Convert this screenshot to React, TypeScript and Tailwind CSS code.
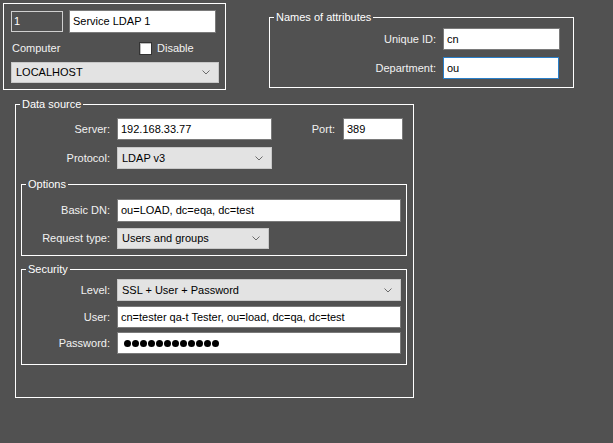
import type { ReactNode } from 'react';

function Chevron() {
  return (
    <svg width="8" height="5" viewBox="0 0 8 5" className="shrink-0">
      <polyline points="0.5,0.5 4,4 7.5,0.5" fill="none" stroke="#6b6b6b" strokeWidth="1" />
    </svg>
  );
}

function Field({ w, h = 'h-[22px]', value, focused = false }: { w: string; h?: string; value: ReactNode; focused?: boolean }) {
  return (
    <div
      className={`${w} ${h} flex items-center bg-white pl-[3px] text-black border ${focused ? 'border-[#2a7fc9]' : 'border-[#7a7a7a]'}`}
    >
      {value}
    </div>
  );
}

function Select({ w, h = 'h-[22px]', value }: { w: string; h?: string; value: string }) {
  return (
    <div className={`${w} ${h} flex items-center justify-between bg-[#e3e3e3] border border-[#c8c8c8] pl-[4px] pr-[8px] text-black`}>
      <span>{value}</span>
      <Chevron />
    </div>
  );
}

function Group({ title, className, children }: { title: string; className: string; children: ReactNode }) {
  return (
    <fieldset className={`border border-white ${className}`}>
      <legend className="ml-[4px] px-[2px] leading-[14px] text-white">{title}</legend>
      {children}
    </fieldset>
  );
}

function Row({ label, labelW, className = '', children }: { label: string; labelW: string; className?: string; children: ReactNode }) {
  return (
    <div className={`flex items-center ${className}`}>
      <span className={`${labelW} text-right text-[#f2f2f2] pr-[7px]`}>{label}</span>
      {children}
    </div>
  );
}

export default function App() {
  const dots = Array.from({ length: 12 });
  return (
    <div
      className="w-[613px] h-[443px] bg-[#515151] text-[11px] overflow-hidden"
      style={{ fontFamily: '"Liberation Sans", Arial, sans-serif' }}
    >
      {/* top row */}
      <div className="flex items-start">
        <div className="ml-[3px] mt-[3px] w-[223px] h-[87px] border border-white">
          <div className="flex items-start pl-[7px] pt-[6px] gap-[6px]">
            <div className="mt-px w-[52px] h-[21px] border border-[#cfcfcf] flex items-center pl-[2px] text-white">1</div>
            <Field w="w-[147px]" h="h-[23px]" value="Service LDAP 1" />
          </div>
          <div className="flex items-center pl-[8px] mt-[8px] h-[15px]">
            <span className="w-[127px] text-[#f2f2f2]">Computer</span>
            <span className="w-[13px] h-[13px] bg-white border border-[#333] shadow-[inset_1px_1px_0_#bbb]" />
            <span className="ml-[5px] text-[#f2f2f2]">Disable</span>
          </div>
          <div className="pl-[7px] mt-[6px]">
            <Select w="w-[208px]" h="h-[21px]" value="LOCALHOST" />
          </div>
        </div>

        <Group title="Names of attributes" className="ml-[43px] mt-[10px] w-[305px] h-[78px]">
          <Row label="Unique ID:" labelW="w-[173px]" className="mt-[4px]">
            <Field w="w-[117px]" value="cn" />
          </Row>
          <Row label="Department:" labelW="w-[173px]" className="mt-[7px]">
            <Field w="w-[116px]" value="ou" focused />
          </Row>
        </Group>
      </div>

      {/* data source */}
      <Group title="Data source" className="ml-[15px] mt-[7px] w-[399px] h-[301px]">
        <Row label="Server:" labelW="w-[101px]" className="mt-[7px]">
          <Field w="w-[155px]" value="192.168.33.77" />
          <span className="w-[71px] text-right pr-[8px] text-[#f2f2f2]">Port:</span>
          <Field w="w-[60px]" value="389" />
        </Row>
        <Row label="Protocol:" labelW="w-[101px]" className="mt-[7px]">
          <Select w="w-[155px]" value="LDAP v3" />
        </Row>

        <Group title="Options" className="ml-[5px] mt-[8px] w-[386px] h-[79px]">
          <Row label="Basic DN:" labelW="w-[95px]" className="mt-[8px]">
            <Field w="w-[284px]" h="h-[23px]" value="ou=LOAD, dc=eqa, dc=test" />
          </Row>
          <Row label="Request type:" labelW="w-[95px]" className="mt-[6px]">
            <Select w="w-[152px]" h="h-[21px]" value="Users and groups" />
          </Row>
        </Group>

        <Group title="Security" className="ml-[5px] mt-[6px] w-[386px] h-[103px]">
          <Row label="Level:" labelW="w-[95px]" className="mt-[3px]">
            <Select w="w-[284px]" value="SSL + User + Password" />
          </Row>
          <Row label="User:" labelW="w-[95px]" className="mt-[5px]">
            <Field w="w-[284px]" value="cn=tester qa-t Tester, ou=load, dc=qa, dc=test" />
          </Row>
          <Row label="Password:" labelW="w-[95px]" className="mt-[4px]">
            <Field
              w="w-[284px]"
              value={
                <span className="flex gap-px pl-[3px]">
                  {dots.map((_, i) => (
                    <span key={i} className="w-[7px] h-[7px] rounded-full bg-black" />
                  ))}
                </span>
              }
            />
          </Row>
        </Group>
      </Group>
    </div>
  );
}
